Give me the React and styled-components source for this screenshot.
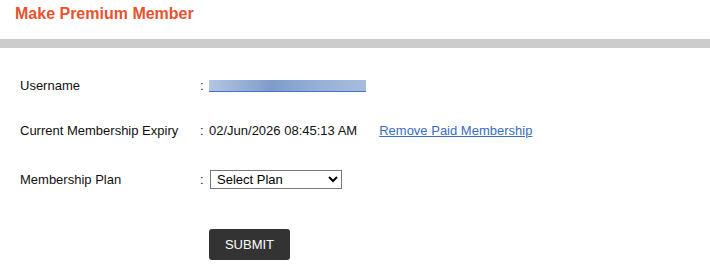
import React from 'react'
import styled, { createGlobalStyle } from 'styled-components'

const Global = createGlobalStyle`
  body {
    margin: 0;
    background: #fff;
    font-family: "Liberation Sans", Arial, sans-serif;
    font-size: 13px;
    color: #111;
  }
`

const Header = styled.div`
  padding: 5px 15px 0;
  height: 34px;
  box-sizing: border-box;
`

const Title = styled.h2`
  margin: 0;
  font-size: 16px;
  font-weight: bold;
  color: #e8522d;
  line-height: 18px;
`

const Divider = styled.div`
  height: 9px;
  background: #cccccc;
  margin-top: 5px;
`

const Form = styled.form`
  padding: 0 20px;
`

const Row = styled.div`
  display: flex;
  align-items: center;
  height: 20px;
  margin-top: ${p => p.$mt}px;
`

const Label = styled.div`
  width: 180px;
  flex: none;
`

const Colon = styled.span`
  width: 9px;
  flex: none;
`

const Blurred = styled.a`
  display: inline-block;
  width: 157px;
  height: 11px;
  margin-top: 1px;
  background: linear-gradient(90deg, #b3c6e2 0%, #7e9ccb 40%, #97b0d8 70%, #a6bcdc 100%);
  border-bottom: 1px solid #4a72c0;
  filter: blur(0.7px);
`

const Value = styled.span`
  margin-right: 22px;
`

const Link = styled.a`
  color: #3a6cc0;
  text-decoration: underline;
  cursor: pointer;
`

const Select = styled.select`
  width: 132px;
  height: 19px;
  margin-left: 1px;
  font-family: "Liberation Sans", Arial, sans-serif;
  font-size: 13px;
  color: #000;
  border: 1px solid #777;
  border-radius: 0;
  padding: 0 2px;
  background: #fff;
`

const Actions = styled.div`
  margin-top: 40px;
  padding-left: 189px;
`

const Button = styled.button`
  width: 81px;
  height: 31px;
  border: 0;
  border-radius: 3px;
  background: #333333;
  color: #fff;
  font-family: "Liberation Sans", Arial, sans-serif;
  font-size: 13px;
  text-transform: uppercase;
  cursor: pointer;
`

export default function App() {
  return (
    <>
      <Global />
      <Header>
        <Title>Make Premium Member</Title>
      </Header>
      <Divider />
      <Form onSubmit={e => e.preventDefault()}>
        <Row $mt={27}>
          <Label>Username</Label>
          <Colon>:</Colon>
          <Blurred />
        </Row>
        <Row $mt={25}>
          <Label>Current Membership Expiry</Label>
          <Colon>:</Colon>
          <Value>02/Jun/2026 08:45:13 AM</Value>
          <Link>Remove Paid Membership</Link>
        </Row>
        <Row $mt={29}>
          <Label>Membership Plan</Label>
          <Colon>:</Colon>
          <Select defaultValue="">
            <option value="">Select Plan</option>
          </Select>
        </Row>
        <Actions>
          <Button type="submit">Submit</Button>
        </Actions>
      </Form>
    </>
  )
}
